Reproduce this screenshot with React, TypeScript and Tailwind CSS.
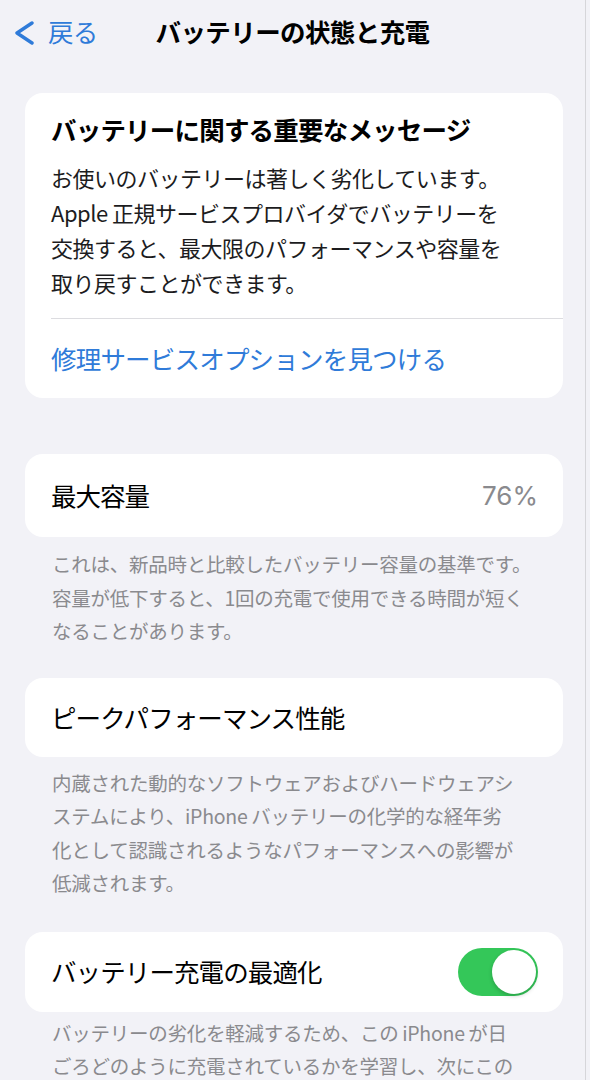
import React from "react";

const jp = { fontFamily: '"Noto Sans CJK JP", "Noto Sans", sans-serif' };

function Footer({ lines, className = "" }: { lines: string[]; className?: string }) {
  return (
    <div className={`px-[52px] text-[19.5px] leading-[33.5px] tracking-[-0.25px] text-[#8a8a8e] ${className}`}>
      {lines.map((l, i) => (
        <div key={i} className="whitespace-nowrap">{l}</div>
      ))}
    </div>
  );
}

export default function App() {
  return (
    <div className="w-[590px] h-[1080px] overflow-hidden bg-[#f2f2f7] flex items-start" style={jp}>
      <div className="w-[585px] shrink-0">
        {/* Nav bar */}
        <div className="h-[62px] grid grid-cols-[1fr_auto_1fr] items-center">
          <div className="flex items-center pl-[14px] gap-[14px] text-[#2f7bd9]">
            <svg width="20" height="24" viewBox="0 0 20 24" fill="none" className="mt-[3px]">
              <path d="M18 2 L3 12 L18 22" stroke="#2f7bd9" strokeWidth="3.4" strokeLinecap="round" strokeLinejoin="round" />
            </svg>
            <span className="text-[25.5px] tracking-[-0.8px] leading-none">戻る</span>
          </div>
          <div className="text-[25.5px] font-bold tracking-[-0.6px] text-black leading-none">
            バッテリーの状態と充電
          </div>
          <div />
        </div>

        {/* Card 1 */}
        <div className="ml-[25px] mr-[22px] mt-[31px] bg-white rounded-[18px] flex flex-col">
          <div className="pt-[19px] pl-[26px] text-[25.5px] leading-[34px] font-bold tracking-[-0.8px] text-black whitespace-nowrap">
            バッテリーに関する重要なメッセージ
          </div>
          <div className="mt-[14px] pl-[26px] text-[22px] leading-[35px] tracking-[-0.5px] text-[#1c1c1e]">
            <div className="whitespace-nowrap">お使いのバッテリーは著しく劣化しています。</div>
            <div className="whitespace-nowrap">Apple 正規サービスプロバイダでバッテリーを</div>
            <div className="whitespace-nowrap">交換すると、最大限のパフォーマンスや容量を</div>
            <div className="whitespace-nowrap">取り戻すことができます。</div>
          </div>
          <div className="mt-[18px] ml-[26px] h-px bg-[#dcdce0]" />
          <div className="h-[79px] flex items-center pl-[26px] text-[25.5px] tracking-[-0.8px] text-[#2f7bd9] whitespace-nowrap">
            修理サービスオプションを見つける
          </div>
        </div>

        {/* Card 2 */}
        <div className="ml-[25px] mr-[22px] mt-[56px] h-[83px] bg-white rounded-[18px] flex items-center justify-between pl-[26px] pr-[25px]">
          <span className="text-[25.5px] tracking-[-1px] text-black">最大容量</span>
          <span className="text-[26px] text-[#8a8a8e]" style={{ fontFamily: 'Inter, "Noto Sans", sans-serif' }}>76%</span>
        </div>
        <Footer
          className="mt-[10px]"
          lines={[
            "これは、新品時と比較したバッテリー容量の基準です。",
            "容量が低下すると、1回の充電で使用できる時間が短く",
            "なることがあります。",
          ]}
        />

        {/* Card 3 */}
        <div className="ml-[25px] mr-[22px] mt-[30px] h-[79px] bg-white rounded-[18px] flex items-center pl-[26px]">
          <span className="text-[25.5px] tracking-[-0.9px] text-black">ピークパフォーマンス性能</span>
        </div>
        <Footer
          className="mt-[9px]"
          lines={[
            "内蔵された動的なソフトウェアおよびハードウェアシ",
            "ステムにより、iPhone\u2009バッテリーの化学的な経年劣",
            "化として認識されるようなパフォーマンスへの影響が",
            "低減されます。",
          ]}
        />

        {/* Card 4 */}
        <div className="ml-[25px] mr-[22px] mt-[32px] h-[80px] bg-white rounded-[18px] flex items-center justify-between pl-[26px] pr-[25px]">
          <span className="text-[25.5px] tracking-[-0.9px] text-black">バッテリー充電の最適化</span>
          <div className="w-[80px] h-[48px] rounded-full bg-[#34c759] p-[2px] flex justify-end">
            <div className="w-[44px] h-[44px] rounded-full bg-white shadow-[0_2px_4px_rgba(0,0,0,0.2)]" />
          </div>
        </div>
        <Footer
          className="mt-[4px]"
          lines={[
            "バッテリーの劣化を軽減するため、この\u2009iPhone\u2009が日",
            "ごろどのように充電されているかを学習し、次にこの",
          ]}
        />
      </div>
      <div className="w-px h-full bg-[#d6d6da] shrink-0" />
      <div className="flex-1" />
    </div>
  );
}
